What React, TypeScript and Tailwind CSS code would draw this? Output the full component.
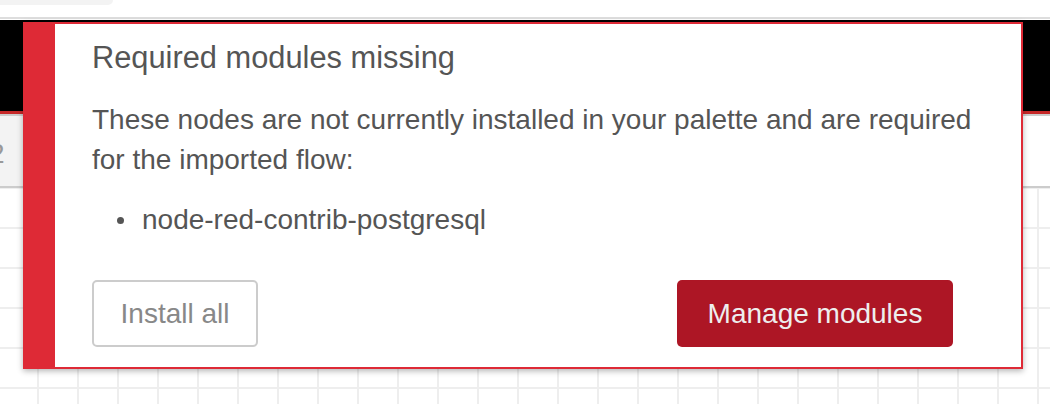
export default function App() {
  return (
    <div className="relative h-[404px] w-[1050px] overflow-hidden bg-white font-['Liberation_Sans',Arial,sans-serif]">
      {/* browser / page top strip */}
      <div className="h-[17px] bg-white">
        <div className="h-[5px] w-[113px] rounded-br-[10px] bg-[#f3f3f3]" />
      </div>
      <div className="h-[2px] bg-[#dddddd]" />
      <div className="h-[1px] bg-white" />

      {/* editor header */}
      <div className="h-[91px] bg-black" />
      <div className="h-[3px] bg-[#c62828]" />
      <div className="h-[2px] bg-[#cccccc]" />

      {/* workspace tabs */}
      <div className="flex h-[70px]">
        <div className="w-[60px] overflow-hidden bg-[#f3f3f3]">
          <div className="-ml-[11px] mt-[18px] text-[28px] leading-[40px] text-[#999999]">2</div>
        </div>
        <div className="flex-1 bg-white" />
      </div>
      <div className="h-[2px] bg-[#cccccc]" />

      {/* flow canvas grid */}
      <div className="h-[216px] bg-white bg-[linear-gradient(to_right,#eeeeee_2px,transparent_2px),linear-gradient(to_bottom,#eeeeee_2px,transparent_2px)] bg-size-[40px_40px] bg-position-[37px_39px]" />

      {/* notification */}
      <div className="absolute left-[23px] top-[22px] h-[347px] w-[1000px] border-2 border-l-[32px] border-[#de2a36] bg-white shadow-[0_2px_6px_rgba(0,0,0,0.3)]">
        <div className="pl-[37px] pr-[36px] pt-[14px] text-[#555555]">
          <div className="text-[30.8px] leading-[40px]">Required modules missing</div>
          <p className="mt-[22px] text-[28px] leading-[40px]">
            These nodes are not currently installed in your palette and are required for the imported flow:
          </p>
          <ul className="mt-[20px] text-[28px] leading-[40px]">
            <li className="flex items-center">
              <span className="ml-[25px] inline-block h-[7px] w-[7px] rounded-full bg-[#555555]" />
              <span className="ml-[18px]">node-red-contrib-postgresql</span>
            </li>
          </ul>
          <div className="mt-[40px] flex items-center justify-between pr-[32px]">
            <button className="h-[67px] w-[166px] rounded-[5px] border-2 border-[#cccccc] bg-white text-[28px] text-[#888888]">
              Install all
            </button>
            <button className="h-[67px] w-[276px] rounded-[5px] bg-[#ad1625] text-[28px] text-[#eeeeee]">
              Manage modules
            </button>
          </div>
        </div>
      </div>
    </div>
  );
}
